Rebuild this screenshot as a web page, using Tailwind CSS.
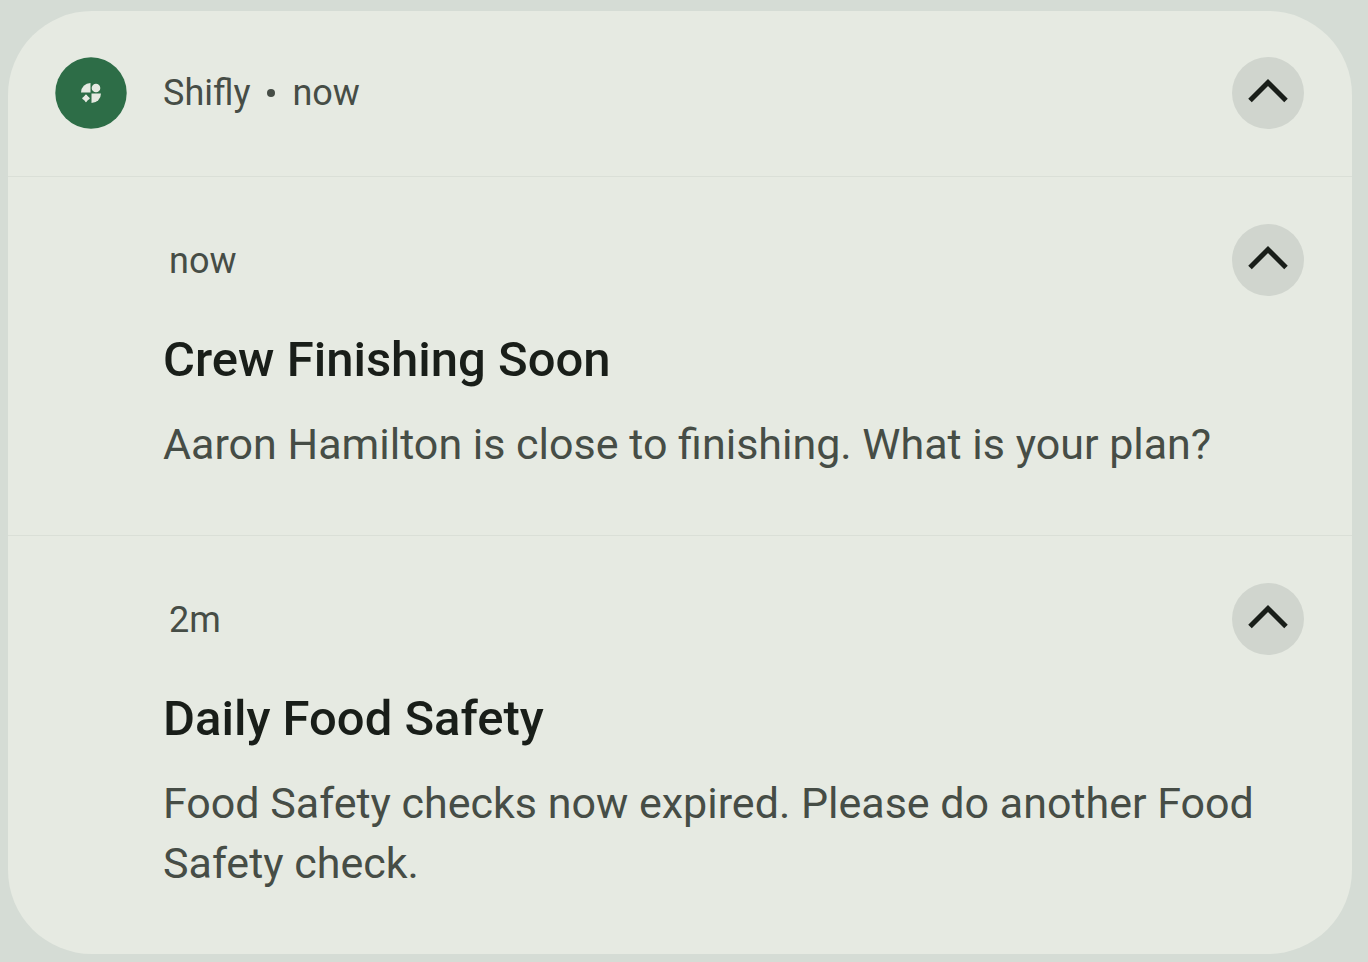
<!DOCTYPE html>
<html lang="en">
<head>
<meta charset="utf-8">
<meta name="viewport" content="width=device-width, initial-scale=1">
<title>Notifications</title>
<script src="https://cdn.jsdelivr.net/npm/@tailwindcss/browser@4"></script>
</head>
<body class="min-h-screen bg-[#d5dcd5] pt-[11px] pr-4 pb-2 pl-2 font-['Roboto',sans-serif] text-[#464d46]">
<main class="overflow-hidden rounded-[84px] bg-[#e6eae2]">
  <header class="flex items-center border-b border-[#dadfd7] pt-[46px] pr-12 pb-[47px] pl-[47px]">
    <svg class="mr-9 size-[72px] shrink-0" viewBox="0 0 72 72" aria-hidden="true">
      <circle cx="36" cy="36" r="35.700" fill="#2d6d47"/>
      <g fill="#e6eae2">
        <path d="M35.500 26v9.500h-9.500a9.500 9.500 0 0 1 9.500-9.500z"/>
        <circle cx="41" cy="31" r="4.300"/>
        <path d="M36.500 36.500h9.500a9.500 9.500 0 0 1-9.500 9.500z"/>
        <path d="M31 38.300l1.300 1.700 1.700 1.300-1.700 1.300-1.300 1.700-1.300-1.700-1.700-1.300 1.700-1.300z" stroke="#e6eae2" stroke-width="1.600" stroke-linejoin="round"/>
      </g>
    </svg>
    <p class="flex grow items-center text-[36px] leading-[48px]"><span>Shifly</span><span class="mx-[17px] size-2 rounded-full bg-[#464d46]"></span><span>now</span></p>
    <button type="button" aria-label="Collapse Shifly notifications" class="flex size-[72px] shrink-0 items-center justify-center rounded-full bg-[#d0d5ce]">
      <svg class="size-[72px]" viewBox="0 0 72 72" fill="none" stroke="#191e19" stroke-width="5"><path d="M18 43.500L36 25.500L54 43.500"/></svg>
    </button>
  </header>
  <article class="border-b border-[#dadfd7] pt-[47px] pr-12 pb-[61px] pl-[155px]">
    <div class="flex items-center justify-between">
      <time class="pt-0.5 pl-1.5 text-[36px] leading-[48px]">now</time>
      <button type="button" aria-label="Collapse Crew Finishing Soon" class="flex size-[72px] shrink-0 items-center justify-center rounded-full bg-[#d0d5ce]">
        <svg class="size-[72px]" viewBox="0 0 72 72" fill="none" stroke="#191e19" stroke-width="5"><path d="M18 43.500L36 25.500L54 43.500"/></svg>
      </button>
    </div>
    <h2 class="mt-[34px] text-[49px] leading-[60px] font-medium text-[#191e19]">Crew Finishing Soon</h2>
    <p class="mt-6 text-[43px] leading-[60px]">Aaron Hamilton is close to finishing. What is your plan?</p>
  </article>
  <article class="pt-[47px] pr-12 pb-[61px] pl-[155px]">
    <div class="flex items-center justify-between">
      <time class="pt-0.5 pl-1.5 text-[36px] leading-[48px]">2m</time>
      <button type="button" aria-label="Collapse Daily Food Safety" class="flex size-[72px] shrink-0 items-center justify-center rounded-full bg-[#d0d5ce]">
        <svg class="size-[72px]" viewBox="0 0 72 72" fill="none" stroke="#191e19" stroke-width="5"><path d="M18 43.500L36 25.500L54 43.500"/></svg>
      </button>
    </div>
    <h2 class="mt-[34px] text-[49px] leading-[60px] font-medium text-[#191e19]">Daily Food Safety</h2>
    <p class="mt-6 text-[43px] leading-[60px]">Food Safety checks now expired. Please do another Food Safety check.</p>
  </article>
</main>
</body>
</html>
